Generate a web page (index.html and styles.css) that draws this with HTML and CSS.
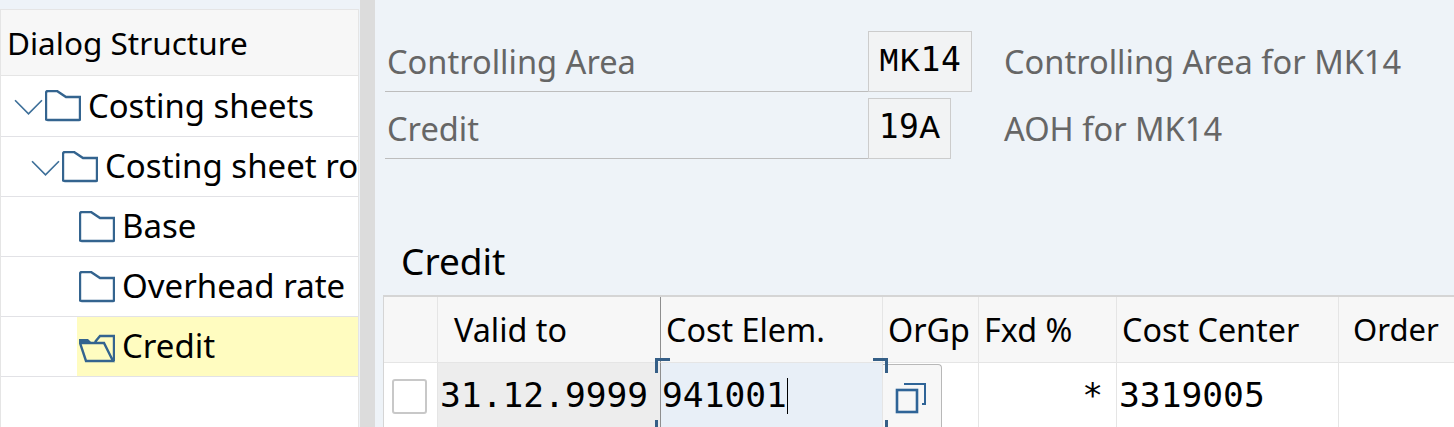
FILE: index.html
```html
<!DOCTYPE html>
<html lang="en">
<head>
  <meta charset="UTF-8" />
  <title>Credit</title>
  <link rel="stylesheet" href="styles.css">
</head>
<body>

  <svg class="defs" width="0" height="0" aria-hidden="true">
    <symbol id="folder" viewBox="0 0 36 32">
      <path d="M1 29V3q0-2 2-2h9l9 6h14v22q0 1-1 1H3q-2 0-2-1z" fill="none" stroke="currentColor" stroke-width="2.4"/>
    </symbol>
    <symbol id="chevron" viewBox="0 0 28 16">
      <path d="M1 1l13 13L27 1" fill="none" stroke="currentColor" stroke-width="1.6"/>
    </symbol>
    <symbol id="folder-open" viewBox="0 0 36 32">
      <path d="M1 12H25L34 30H7zM16 11L21 5H35V30" fill="none" stroke="currentColor" stroke-width="2.4"/>
      <path d="M0 8h9l3 3H0z" fill="currentColor"/>
    </symbol>
  </svg>

  <div class="page">

    <aside class="tree">
      <div class="tree-head">Dialog Structure</div>
      <div class="tree-row level-1">
        <svg class="chevron"><use href="#chevron"/></svg>
        <svg class="folder"><use href="#folder"/></svg>
        <span class="tree-text">Costing sheets</span>
      </div>
      <div class="tree-row level-2">
        <svg class="chevron"><use href="#chevron"/></svg>
        <svg class="folder"><use href="#folder"/></svg>
        <span class="tree-text">Costing sheet rows</span>
      </div>
      <div class="tree-row level-3">
        <svg class="folder"><use href="#folder"/></svg>
        <span class="tree-text">Base</span>
      </div>
      <div class="tree-row level-3">
        <svg class="folder"><use href="#folder"/></svg>
        <span class="tree-text">Overhead rate</span>
      </div>
      <div class="tree-row level-3 selected">
        <div class="selected-bar">
          <svg class="folder"><use href="#folder-open"/></svg>
          <span class="tree-text">Credit</span>
        </div>
      </div>
    </aside>

    <div class="splitter"></div>

    <main class="main">
      <div class="form-row">
        <div class="form-label">Controlling Area</div>
        <div class="form-value wide">MK<b>14</b></div>
        <div class="form-desc">Controlling Area for MK14</div>
      </div>
      <div class="form-row second">
        <div class="form-label">Credit</div>
        <div class="form-value narrow"><b>19</b>A</div>
        <div class="form-desc">AOH for MK14</div>
      </div>

      <h2 class="table-title">Credit</h2>

      <div class="grid">
        <div class="th"></div>
        <div class="th pad-valid">Valid to</div>
        <div class="th dark-left">Cost Elem.</div>
        <div class="th">OrGp</div>
        <div class="th">Fxd %</div>
        <div class="th">Cost Center</div>
        <div class="th pad-order">Order</div>

        <div class="td select-cell"><span class="checkbox"></span></div>
        <div class="td mono readonly">31.12.9999</div>
        <div class="td mono focused">941001<span class="caret"></span>
          <i class="corner tl"></i><i class="corner tr"></i><i class="corner bl"></i><i class="corner br"></i>
        </div>
        <div class="td help-cell">
          <div class="help-btn">
            <svg width="32" height="32" viewBox="0 0 32 32"><path d="M9 2h21v20h-3" fill="none" stroke="#2f6497" stroke-width="2"/><rect x="2" y="8" width="20" height="22" fill="none" stroke="#2f6497" stroke-width="2.6"/></svg>
          </div>
        </div>
        <div class="td mono fxd">*</div>
        <div class="td mono">3319005</div>
        <div class="td"></div>
      </div>
    </main>

  </div>

</body>
</html>
```

FILE: styles.css
```css
html, body {
  margin: 0;
  height: 427px;
  overflow: hidden;
}
body {
  background-color: #eef3f8;
  color: #000;
  font-family: "Noto Sans", "Open Sans", sans-serif;
  font-size: 32.6px;
}
.defs {
  display: block;
  height: 0;
}
.page {
  display: flex;
  height: 427px;
}

/* Baum links */
.tree {
  width: 359px;
  flex: none;
  margin-top: 9px;
  background: #fff;
  border-left: 1px solid #e5e5e5;
  border-right: 1px solid #e5e5e5;
  box-sizing: border-box;
  overflow: hidden;
}
.tree-head {
  height: 67px;
  box-sizing: border-box;
  padding: 11px 0 0 6px;
  background: #f7f7f7;
  border-top: 1px solid #e5e5e5;
  border-bottom: 1px solid #e5e5e5;
  font-size: 31.5px;
  line-height: 44px;
}
.tree-row {
  height: 60px;
  box-sizing: border-box;
  border-bottom: 1px solid #e2e2e6;
  display: flex;
  align-items: center;
  white-space: nowrap;
}
.tree-row.level-1 { height: 61px; }
.level-1 { padding-left: 13px; }
.level-2 { padding-left: 30px; }
.level-3 { padding-left: 78px; }
.tree-text {
  margin: -2px 0 0 7px;
  font-size: 33px;
  line-height: 44px;
}
.level-1 .tree-text {
  margin-top: 0;
  font-size: 32.8px;
}
.chevron {
  width: 29px;
  height: 17px;
  color: #3d6f99;
  margin-top: 3px;
  margin-right: 2px;
  flex: none;
}
.folder {
  width: 36px;
  height: 32px;
  color: #34648f;
  flex: none;
}
.tree-row.selected {
  padding-left: 76px;
}
.selected-bar {
  flex: 1;
  height: 100%;
  display: flex;
  align-items: center;
  padding-left: 2px;
  background: #fffcc0;
}

.splitter {
  width: 15px;
  flex: none;
  margin-left: 1px;
  background: #dcdcdc;
}

/* Formular */
.main {
  flex: 1;
  padding-left: 10px;
  min-width: 0;
  overflow: hidden;
}
.form-row {
  display: flex;
  height: 61px;
  margin-top: 31px;
  color: #666;
}
.form-row.second {
  margin-top: 6px;
}
.form-label {
  width: 483px;
  flex: none;
  box-sizing: border-box;
  padding: 9px 0 0 2px;
  line-height: 44px;
  border-bottom: 1px solid #bdbdbd;
}
.form-value {
  flex: none;
  box-sizing: border-box;
  border: 1px solid #ccc;
  background: #f2f3f4;
  color: #000;
  font-family: "Liberation Mono", monospace;
  font-size: 34px;
  letter-spacing: 0.5px;
  line-height: 56px;
  text-align: center;
}
.form-value b {
  font-weight: normal;
  font-family: "DejaVu Sans Mono", monospace;
  font-size: 33px;
}
.wide { width: 104px; }
.narrow { width: 83px; }
.form-desc {
  padding: 9px 0 0 32px;
  line-height: 44px;
}
.second .form-desc {
  padding-left: 53px;
}

.table-title {
  margin: 0;
  padding: 81px 0 0 16px;
  height: 57px;
  font-size: 37px;
  font-weight: normal;
  line-height: 44px;
  margin-top: -1px;
}

/* Tabelle */
.grid {
  display: grid;
  grid-template-columns: 53px 223px 222px 96px 138px 222px 200px;
  grid-template-rows: 66px 68px;
  margin-left: -2px;
  margin-top: -1px;
  border-top: 2px solid #d5d5d5;
  border-left: 1px solid #d5d5d5;
}
.th {
  box-sizing: border-box;
  padding: 8px 0 0 5px;
  background: #f7f7f7;
  border-left: 1px solid #e5e5e5;
  border-bottom: 1px solid #e5e5e5;
  font-size: 32.3px;
  line-height: 48px;
  white-space: nowrap;
}
.th:first-child { border-left: none; }
.th.pad-valid { padding-left: 16px; }
.th.pad-order { padding-left: 14px; font-size: 31px; }
.th.dark-left { border-left-color: #8e8e8e; }
.td {
  position: relative;
  box-sizing: border-box;
  background: #fff;
  border-left: 1px solid #e5e5e5;
  line-height: 64px;
  white-space: nowrap;
}
.mono {
  font-family: "DejaVu Sans Mono", monospace;
  font-size: 34.6px;
  padding-left: 2px;
}
.select-cell {
  border-left: none;
  padding: 16px 0 0 8px;
}
.checkbox {
  display: block;
  width: 35px;
  height: 35px;
  box-sizing: border-box;
  border: 2px solid #c8c8c8;
  border-radius: 3px;
}
.readonly {
  background: #ededed;
}
.focused {
  z-index: 1;
  background: #e8eff7;
  border-left-color: #8e8e8e;
  padding-left: 1px;
}
.caret {
  display: inline-block;
  width: 1px;
  height: 36px;
  background: #000;
  vertical-align: -7px;
}
.corner {
  position: absolute;
  width: 12px;
  height: 12px;
  border: 0 solid #355f87;
}
.corner.tl { top: -5px; left: -6px; border-width: 3px 0 0 3px; }
.corner.tr { top: -5px; right: -6px; border-width: 3px 3px 0 0; }
.corner.bl { bottom: -4px; left: -6px; border-width: 0 0 3px 3px; }
.corner.br { bottom: -4px; right: -6px; border-width: 0 3px 3px 0; }
.help-cell {
  padding: 0;
}
.help-btn {
  width: 59px;
  height: 68px;
  box-sizing: border-box;
  margin-top: 1px;
  background: #f7f7f7;
  border-top: 1px solid #b8b8b8;
  border-right: 1px solid #b8b8b8;
  border-radius: 0 4px 0 0;
  padding: 17px 0 0 12px;
}
.help-btn svg {
  display: block;
}
.fxd {
  text-align: right;
  padding-right: 13px;
}
```
